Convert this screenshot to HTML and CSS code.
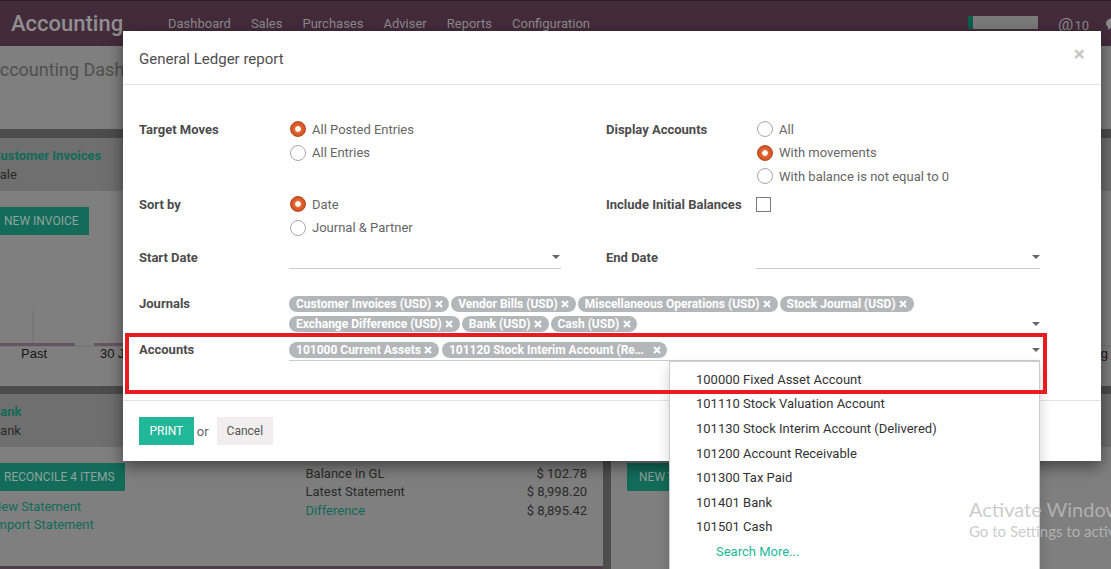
FILE: index.html
```html
<!DOCTYPE html>
<html lang="en">
<head>
<meta charset="utf-8">
<title>General Ledger report</title>
<link rel="stylesheet" href="styles.css">
</head>
<body>
<div class="app">
  <header class="navbar">
    <div class="brand">Accounting</div>
    <nav class="menu">
      <span>Dashboard</span><span>Sales</span><span>Purchases</span><span>Adviser</span><span>Reports</span><span>Configuration</span>
    </nav>
    <div class="systray">
      <div class="progress"></div>
      <div class="mentions"><span class="at">@</span><span>10</span></div>
      <svg class="chat" viewBox="0 0 16 14"><path d="M8 1C4 1 1 3.4 1 6.3c0 1.6.9 3 2.4 4L2.6 13l3.4-1.9c.6.1 1.3.2 2 .2 4 0 7-2.4 7-5.2S12 1 8 1z" fill="#8a8a8a"/></svg>
    </div>
  </header>
  <div class="cp"><div class="crumb">Accounting Dashboard</div></div>
  <div class="kanban">
    <section class="card">
      <div class="card-head"><div class="card-title">Customer Invoices</div><div class="card-sub">Sale</div></div>
      <div class="card-body">
        <span class="btn-dash">NEW INVOICE</span>
        <svg class="chart" width="611" height="60">
          <line x1="0" y1="41" x2="611" y2="41" stroke="#737373" stroke-width="1"/>
          <line x1="41" y1="6" x2="41" y2="40" stroke="#737373" stroke-width="1"/>
          <rect x="0" y="38" width="83" height="3" fill="#665465"/>
          <rect x="102" y="38" width="83" height="3" fill="#665465"/>
          <text x="42" y="53" text-anchor="middle">Past</text>
          <text x="108" y="53">30 Jul - 05 Aug</text>
        </svg>
      </div>
    </section>
    <section class="card">
      <div class="card-head"><div class="card-title">Vendor Bills</div><div class="card-sub">Purchase</div></div>
      <div class="card-body">
        <span class="btn-dash">NEW BILL</span>
        <svg class="chart" width="500" height="60">
          <line x1="0" y1="41" x2="500" y2="41" stroke="#737373" stroke-width="1"/>
          <text x="481" y="53" text-anchor="end">20 Aug - 26 Aug</text>
        </svg>
      </div>
    </section>
    <section class="card">
      <div class="card-head"><div class="card-title">Bank</div><div class="card-sub">Bank</div></div>
      <div class="card-body split">
        <div class="col">
          <span class="btn-dash">RECONCILE 4 ITEMS</span>
          <div class="links"><span>New Statement</span><span>Import Statement</span></div>
        </div>
        <div class="col stats">
          <div class="stat"><span>Balance in GL</span><span>$ 102.78</span></div>
          <div class="stat"><span>Latest Statement</span><span>$ 8,998.20</span></div>
          <div class="stat"><span class="green">Difference</span><span>$ 8,895.42</span></div>
        </div>
      </div>
      <div class="graph-line"></div>
    </section>
    <section class="card">
      <div class="card-head"><div class="card-title">Cash</div><div class="card-sub">Cash</div></div>
      <div class="card-body">
        <span class="btn-dash">NEW TRANSACTION</span>
      </div>
    </section>
  </div>
</div>

<div class="modal">
  <div class="modal-header">
    <h4 class="modal-title">General Ledger report</h4>
    <span class="close">×</span>
  </div>
  <div class="modal-body">
    <div class="frow r1">
      <div class="lbl">Target Moves</div>
      <div class="field">
        <div class="radio on"><i></i>All Posted Entries</div>
        <div class="radio"><i></i>All Entries</div>
      </div>
      <div></div>
      <div class="lbl">Display Accounts</div>
      <div class="field">
        <div class="radio"><i></i>All</div>
        <div class="radio on"><i></i>With movements</div>
        <div class="radio"><i></i>With balance is not equal to 0</div>
      </div>
    </div>
    <div class="frow r2">
      <div class="lbl">Sort by</div>
      <div class="field">
        <div class="radio on"><i></i>Date</div>
        <div class="radio"><i></i>Journal &amp; Partner</div>
      </div>
      <div></div>
      <div class="lbl">Include Initial Balances</div>
      <div class="field"><span class="check"></span></div>
    </div>
    <div class="frow r3">
      <div class="lbl lbl-date">Start Date</div>
      <div class="date"><span class="caret c-left"></span></div>
      <div></div>
      <div class="lbl lbl-date">End Date</div>
      <div class="date"><span class="caret"></span></div>
    </div>
    <div class="frow r4">
      <div class="lbl lbl-many">Journals</div>
      <div class="many">
        <div class="tags">
          <span class="tag">Customer Invoices (USD)<svg viewBox="0 0 8 8"><path d="M1 1L7 7M7 1L1 7"/></svg></span>
          <span class="tag">Vendor Bills (USD)<svg viewBox="0 0 8 8"><path d="M1 1L7 7M7 1L1 7"/></svg></span>
          <span class="tag">Miscellaneous Operations (USD)<svg viewBox="0 0 8 8"><path d="M1 1L7 7M7 1L1 7"/></svg></span>
          <span class="tag">Stock Journal (USD)<svg viewBox="0 0 8 8"><path d="M1 1L7 7M7 1L1 7"/></svg></span>
          <span class="tag">Exchange Difference (USD)<svg viewBox="0 0 8 8"><path d="M1 1L7 7M7 1L1 7"/></svg></span>
          <span class="tag">Bank (USD)<svg viewBox="0 0 8 8"><path d="M1 1L7 7M7 1L1 7"/></svg></span>
          <span class="tag">Cash (USD)<svg viewBox="0 0 8 8"><path d="M1 1L7 7M7 1L1 7"/></svg></span>
        </div>
        <span class="caret"></span>
      </div>
    </div>
    <div class="frow r5">
      <div class="lbl lbl-many">Accounts</div>
      <div class="many accounts">
        <div class="tags">
          <span class="tag">101000 Current Assets<svg viewBox="0 0 8 8"><path d="M1 1L7 7M7 1L1 7"/></svg></span>
          <span class="tag tag-long"><span class="trunc">101120 Stock Interim Account (Received)</span><svg viewBox="0 0 8 8"><path d="M1 1L7 7M7 1L1 7"/></svg></span>
        </div>
        <span class="caret"></span>
        <ul class="dropdown">
          <li class="opt">100000 Fixed Asset Account</li>
          <li class="opt">101110 Stock Valuation Account</li>
          <li class="opt">101130 Stock Interim Account (Delivered)</li>
          <li class="opt">101200 Account Receivable</li>
          <li class="opt">101300 Tax Paid</li>
          <li class="opt">101401 Bank</li>
          <li class="opt">101501 Cash</li>
          <li class="opt more">Search More...</li>
        </ul>
      </div>
    </div>
  </div>
  <div class="modal-footer">
    <span class="btn-primary">PRINT</span>
    <span class="or">or</span>
    <span class="btn-cancel">Cancel</span>
  </div>
</div>

<div class="highlight"></div>

<div class="watermark">
  <div class="wm1">Activate Windows</div>
  <div class="wm2">Go to Settings to activate Windows.</div>
</div>
</body>
</html>
```

FILE: styles.css
```css
* { box-sizing: border-box; margin: 0; padding: 0; }
html, body { width: 1111px; height: 569px; overflow: hidden; }
body {
  position: relative;
  background: #7f7f7f;
  font-family: Roboto, "Liberation Sans", sans-serif;
  font-size: 13px;
  color: #2c2c2c;
}
ul { list-style: none; }

/* ---------- background app (dimmed) ---------- */
.navbar {
  height: 46px;
  background: #442b3c;
  border-top: 1px solid #2b1b27;
  display: flex;
  align-items: center;
  color: #8b8b8b;
  font-size: 13px;
}
.brand { width: 158px; padding-left: 11px; font-size: 22px; font-weight: 500; color: #8f8f8f; }
.menu { display: flex; }
.menu span { padding: 0 10px; }
.systray { margin-left: auto; margin-right: -10px; display: flex; align-items: center; }
.progress { width: 70px; height: 13px; background: #7b7b7b; border-left: 5px solid #0d5e4c; margin-top: -2px; }
.mentions { margin-left: 20px; display: flex; align-items: baseline; color: #8b8b8b; }
.at { font-size: 17px; margin-right: 1px; }
.chat { margin-left: 16px; width: 16px; height: 14px; }

.cp { height: 83px; background: #7f7f7f; }
.crumb { font-size: 18px; line-height: 24px; padding-top: 12px; margin-left: -12px; color: #4f4f4f; }

.kanban {
  width: 1160px;
  margin-left: -24px;
  background: #4c4c4c;
  padding-top: 9px;
  display: grid;
  grid-template-columns: 627px 1fr;
  grid-template-rows: 248px 180px;
  gap: 8px;
}
.card { background: #7f7f7f; overflow: hidden; }
.card-head { height: 53px; background: #6f6f6f; padding: 8px 16px; line-height: 19px; }
.card-title { color: #116a5a; font-weight: bold; }
.card-sub { color: #2a2a2a; }
.card-body { padding: 16px; }
.btn-dash {
  display: inline-block;
  background: #136b5a;
  color: #8fa39d;
  font-size: 12px;
  line-height: 28px;
  padding: 0 10px 0 12px;
}
.chart { display: block; margin-top: 70px; font-family: "Liberation Sans", Arial, sans-serif; font-size: 13px; fill: #151515; }
.split { display: grid; grid-template-columns: 1fr 1fr; height: 119px; }
.links { margin-top: 6.5px; display: flex; flex-direction: column; line-height: 18.3px; color: #116a5a; }
.stats { padding-left: 16px; padding-top: 1.5px; }
.stat { display: flex; justify-content: space-between; line-height: 18.5px; color: #2a2a2a; }
.green { color: #116a5a; }
.graph-line { height: 3px; background: #4f3d4c; }

/* ---------- modal ---------- */
.modal {
  position: absolute;
  left: 123px;
  top: 31px;
  width: 978px;
  background: #fff;
  box-shadow: 0 5px 15px rgba(0, 0, 0, .5);
  color: #4c4c4c;
  z-index: 2;
}
.modal-header {
  display: flex;
  justify-content: space-between;
  align-items: flex-start;
  padding: 17px 16px 14px;
  border-bottom: 1px solid #e5e5e5;
}
.modal-title { font-size: 15px; line-height: 22px; font-weight: normal; color: #4f4f4f; }
.close { font-size: 21px; font-weight: bold; line-height: 22px; color: #c8c8c8; margin-top: -5px; }

.modal-body { padding: 32.25px 0 39px 16px; }
.frow { display: grid; grid-template-columns: 150px 272px 45px 150px 284px; }
.r2 { margin-top: 4.5px; }
.r3 { margin-top: 6px; }
.r4 { margin-top: 25px; }
.r5 { margin-top: 6px; }

.lbl { font-weight: bold; line-height: 23.5px; padding-top: 1px; color: #4c4c4c; }
.lbl-date { line-height: 23px; }
.lbl-many { line-height: 20px; padding-top: 0; }

.radio { display: flex; align-items: center; height: 23.5px; color: #666; }
.radio i {
  flex: none;
  width: 16px;
  height: 16px;
  margin: 0 6px 0 1px;
  border-radius: 50%;
  border: 1px solid #a8a8a8;
  background: #fff;
}
.radio.on i {
  border-color: #b64b1d;
  background: radial-gradient(circle at 50% 50%, #fff 0, #fff 2.4px, #e86c31 3.2px, #d8592a 5.5px, #c34e22 8px);
}
.check { display: block; width: 15px; height: 15px; border: 1px solid #7a7a7a; margin-top: 4.25px; }

.date {
  height: 24px;
  border-bottom: 1px solid #ccc;
  display: flex;
  justify-content: flex-end;
  align-items: center;
}
.caret {
  flex: none;
  width: 0;
  height: 0;
  border-left: 4px solid transparent;
  border-right: 4px solid transparent;
  border-top: 4px solid #666;
}
.c-left { margin-right: 1px; }

.many { grid-column: 2 / -1; display: flex; align-items: flex-end; position: relative; }
.many > .caret { margin-bottom: 8px; }
.accounts { border-bottom: 1px solid #ccc; }
.tags { flex: 1; display: flex; flex-wrap: wrap; }
.tag {
  display: inline-flex;
  align-items: center;
  height: 16px;
  margin: 2px 2px 2px 0;
  padding: 0 6.5px 0 7px;
  border-radius: 8px;
  background: #b4b7ba;
  color: #fff;
  font-weight: bold;
  font-size: 12px;
  line-height: 16px;
  white-space: nowrap;
}
.tag svg { width: 8px; height: 8px; margin-left: 3.5px; stroke: #fff; stroke-width: 2.1; }
.tag-long { margin-left: 1px; padding-right: 6px; }
.trunc { display: inline-block; max-width: 195px; overflow: hidden; text-overflow: ellipsis; }
.tag-long svg { margin-left: 9px; }

.dropdown {
  position: absolute;
  left: 380px;
  top: 100%;
  margin-top: 1px;
  width: 371px;
  background: #fff;
  border: 1px solid #ccc;
  box-shadow: 0 6px 12px rgba(0, 0, 0, .18);
  padding: 5.5px 0 10px;
  z-index: 5;
}
.opt { line-height: 24.6px; padding-left: 26px; color: #333; white-space: nowrap; }
.opt.more { padding-left: 46px; color: #21b799; }

.modal-footer {
  border-top: 1px solid #e5e5e5;
  padding: 16px;
  display: flex;
  align-items: center;
}
.btn-primary { background: #21b799; color: #fff; font-size: 12px; line-height: 28px; padding: 0 10.5px; }
.or { margin: 0 8px 0 3px; color: #666; }
.btn-cancel { background: #f0eeee; color: #555; font-size: 12px; line-height: 28px; padding: 0 10px; }

/* ---------- annotations ---------- */
.highlight {
  position: absolute;
  left: 125px;
  top: 333px;
  width: 922px;
  height: 61px;
  border: 4.5px solid #e81a22;
  z-index: 10;
}
.watermark {
  position: absolute;
  left: 969px;
  top: 496px;
  color: rgba(190, 190, 190, .8);
  font-family: Lato, "Open Sans", sans-serif;
  white-space: nowrap;
  z-index: 20;
}
.wm1 { font-size: 20px; line-height: 26px; }
.wm2 { font-size: 15px; line-height: 18px; }
```
